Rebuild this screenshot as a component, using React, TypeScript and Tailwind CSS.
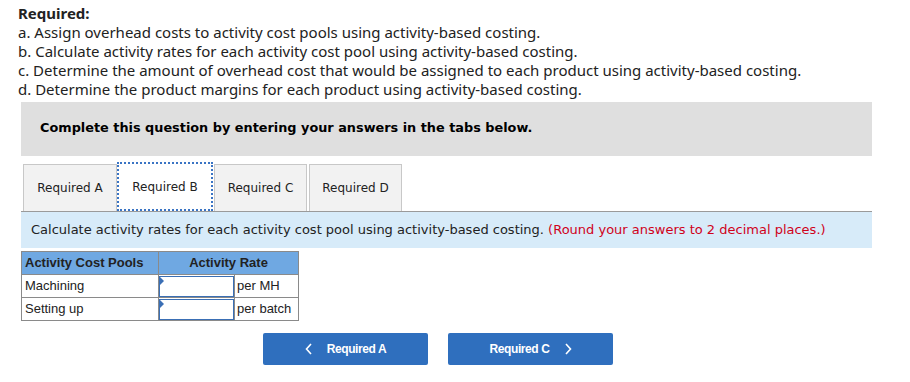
import React from "react";

export default function App() {
  const verdana = { fontFamily: '"DejaVu Sans", Verdana, sans-serif' };
  return (
    <div className="w-[910px] h-[382px] bg-white relative overflow-hidden">
      <div
        className="pl-[18px] pt-[4px] text-[15px] leading-[19px] text-[#222]"
        style={{ fontFamily: '"Noto Sans", "Open Sans", sans-serif' }}
      >
        <div className="font-bold">Required:</div>
        <div>a. Assign overhead costs to activity cost pools using activity-based costing.</div>
        <div>b. Calculate activity rates for each activity cost pool using activity-based costing.</div>
        <div>c. Determine the amount of overhead cost that would be assigned to each product using activity-based costing.</div>
        <div>d. Determine the product margins for each product using activity-based costing.</div>
      </div>

      <div className="ml-[21px] w-[851px]">
        <div
          className="mt-[3px] h-[54px] bg-[#dfdfdf] pl-[19px] pt-[16px] text-[12.85px] font-bold text-black"
          style={verdana}
        >
          Complete this question by entering your answers in the tabs below.
        </div>

        <div className="mt-[6px] flex items-end h-[49px] pl-[2px] text-[12px] text-[#222]" style={verdana}>
          <div className="h-[47px] w-[94px] bg-[#f2f2f2] border border-[#c8c8c8] border-b-0 flex items-center justify-center">
            Required A
          </div>
          <div className="h-[49px] w-[96px] bg-white border-2 border-dotted border-[#3a74c4] flex items-center justify-center">
            Required B
          </div>
          <div className="h-[47px] w-[93px] bg-[#f2f2f2] border border-[#c8c8c8] border-b-0 flex items-center justify-center ml-[1px]">
            Required C
          </div>
          <div className="h-[47px] w-[93px] bg-[#f2f2f2] border border-[#c8c8c8] border-b-0 flex items-center justify-center ml-[2px]">
            Required D
          </div>
        </div>

        <div
          className="h-[37px] bg-[#d7ebf9] border-t border-[#9a9a9a] pl-[10px] flex items-center text-[13px] text-[#222]"
          style={verdana}
        >
          <span>Calculate activity rates for each activity cost pool using activity-based costing.&nbsp;</span>
          <span className="text-[#d0021b]">(Round your answers to 2 decimal places.)</span>
        </div>

        <table
          className="mt-[3px] border-collapse text-[13px] text-[#222]"
          style={{ fontFamily: '"Liberation Sans", Arial, sans-serif' }}
        >
          <thead>
            <tr className="h-[23px] bg-[#6fa8e2]">
              <th className="border border-[#8a8a8a] w-[137px] text-left pl-[3px] font-bold">Activity Cost Pools</th>
              <th colSpan={2} className="border border-[#8a8a8a] font-bold text-center">Activity Rate</th>
            </tr>
          </thead>
          <tbody>
            {[
              ["Machining", "per MH"],
              ["Setting up", "per batch"],
            ].map(([a, b]) => (
              <tr key={a} className="h-[23px]">
                <td className="border border-[#8a8a8a] pl-[3px]">{a}</td>
                <td className="border border-[#8a8a8a] p-0 w-[76px]">
                  <div className="relative h-[21px] w-[75px] border border-[#3a6fb5] bg-white">
                    <div className="absolute left-0 top-0 w-0 h-0 border-t-[4px] border-b-[4px] border-l-[4px] border-t-transparent border-b-transparent border-l-[#3a6fb5]" />
                  </div>
                </td>
                <td className="border border-[#8a8a8a] pl-[2px] w-[64px]">{b}</td>
              </tr>
            ))}
          </tbody>
        </table>
      </div>

      <div
        className="mt-[12px] flex gap-[20px] pl-[263px] text-[12px] font-bold text-white"
        style={{ fontFamily: '"Liberation Sans", Arial, sans-serif' }}
      >
        <div className="h-[32px] w-[165px] rounded-[2px] bg-[#2f6fbe] flex items-center justify-center gap-[14px]">
          <svg width="8" height="12" viewBox="0 0 8 12"><path d="M6 1 L1.5 6 L6 11" fill="none" stroke="white" strokeWidth="1.6" /></svg>
          <span className="tracking-[-0.4px]">Required A</span>
        </div>
        <div className="h-[32px] w-[165px] rounded-[2px] bg-[#2f6fbe] flex items-center justify-center gap-[14px]">
          <span className="tracking-[-0.4px]">Required C</span>
          <svg width="8" height="12" viewBox="0 0 8 12"><path d="M2 1 L6.5 6 L2 11" fill="none" stroke="white" strokeWidth="1.6" /></svg>
        </div>
      </div>
    </div>
  );
}
